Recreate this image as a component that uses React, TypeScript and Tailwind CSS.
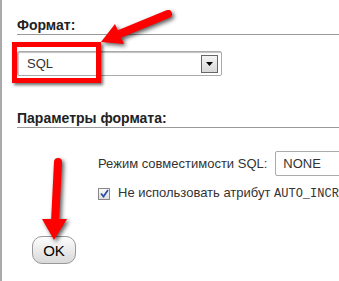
import React from 'react';

const Arrows = () => (
  <svg
    width="339"
    height="281"
    viewBox="0 0 339 281"
    className="absolute left-0 top-0 pointer-events-none drop-shadow-[2px_2px_2px_rgba(0,0,0,0.65)]"
  >
    {/* arrow to the format select */}
    <line x1="168" y1="14" x2="117" y2="35" stroke="#f00" strokeWidth="8" strokeLinecap="round" />
    <polygon points="101,42 124,44 115,24" fill="#f00" />
    {/* arrow to the OK button */}
    <line x1="58" y1="162" x2="55" y2="222" stroke="#f00" strokeWidth="8" strokeLinecap="round" />
    <polygon points="54,240 42,219 67,219" fill="#f00" />
  </svg>
);

export default function App() {
  return (
    <div className="relative w-[339px] h-[281px] overflow-hidden bg-white font-['Liberation_Sans',Arial,sans-serif] text-[#333]">
      <div className="h-full border-l-2 border-[#aaa] pl-[15px]">
        {/* Формат */}
        <div className="pt-[17px] text-[14px] font-bold leading-[16px] pb-[1px] border-b border-[#999] text-[#222]">
          Формат:
        </div>
        <div className="mt-[16px] flex h-[25px] w-[205px] items-center justify-between rounded-[2px] border border-[#aaa] pl-[9px] pr-[3px] shadow-[inset_1px_1px_1px_rgba(0,0,0,0.25)]">
          <span className="text-[13px] leading-[15px]">SQL</span>
          <span className="flex h-[18px] w-[17px] items-center justify-center border border-[#666] bg-gradient-to-b from-[#f4f4f4] to-[#d8d8d8]">
            <svg width="7" height="4" viewBox="0 0 7 4">
              <polygon points="0,0 7,0 3.5,4" fill="#000" />
            </svg>
          </span>
        </div>

        {/* Параметры формата */}
        <div className="mt-[34px] text-[14px] font-bold leading-[16px] pb-[1px] border-b border-[#999] text-[#222]">
          Параметры формата:
        </div>

        <div className="mt-[23px] pl-[81px] text-[13px] leading-[15px] whitespace-nowrap">
          <div className="flex items-center gap-[8px]">
            <span className="shrink-0">Режим совместимости SQL:</span>
            <span className="flex h-[25px] w-[80px] shrink-0 items-center rounded-[2px] border border-[#aaa] pl-[7px]">NONE</span>
          </div>
          <div className="mt-[10px] flex h-[15px] items-center gap-[8px]">
            <span className="flex h-[12px] w-[12px] shrink-0 items-center justify-center border border-[#888] bg-gradient-to-b from-[#fafafa] to-[#ddd]">
              <svg width="9" height="9" viewBox="0 0 9 9">
                <path d="M1 4.5 L3.5 7.5 L8 1" fill="none" stroke="#2b4ea8" strokeWidth="1.8" />
              </svg>
            </span>
            <span className="shrink-0">
              Не использовать атрибут{' '}
              <span className="font-['Liberation_Mono',monospace] text-[12px] leading-[15px]">AUTO_INCREMENT</span>
            </span>
          </div>
        </div>

        <div className="mt-[35px] pl-[15px]">
          <button className="h-[28px] w-[44px] rounded-[10px] border border-[#999] bg-gradient-to-b from-[#fdfdfd] to-[#d9d9d9] text-[15px] leading-[17px] text-black">
            OK
          </button>
        </div>
      </div>

      {/* annotations */}
      <div className="absolute left-[12px] top-[42px] h-[41px] w-[89px] border-[5px] border-[#f00] shadow-[2px_2px_3px_rgba(0,0,0,0.6)]" />
      <Arrows />
    </div>
  );
}
